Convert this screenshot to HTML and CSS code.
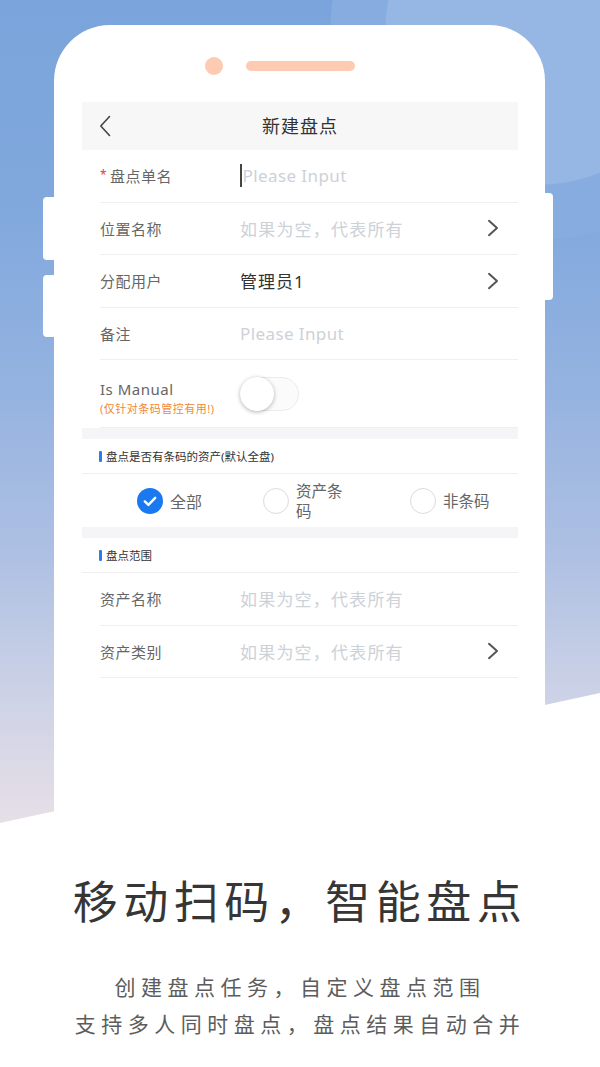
FILE: index.html
```html
<!DOCTYPE html>
<html lang="zh-CN">
<head>
<meta charset="utf-8">
<title>新建盘点</title>
<link rel="stylesheet" href="styles.css">
</head>
<body>
<div class="stage">
  <div class="phone">
    <span class="btn btn-l1"></span>
    <span class="btn btn-l2"></span>
    <span class="btn btn-r"></span>
    <div class="speaker"><span class="cam"></span><span class="slot"></span></div>
    <div class="screen">
      <div class="nav">
        <svg class="back" width="12" height="22" viewBox="0 0 12 22"><path d="M10.5 1.5 L1.8 11 L10.5 20.5"/></svg>
        <div class="nav-title">新建盘点</div>
        <span></span>
      </div>

      <div class="row">
        <div class="label"><span class="req">*</span>盘点单名</div>
        <div class="value"><span class="cursor"></span><span class="ph">Please Input</span></div>
      </div>
      <div class="row">
        <div class="label">位置名称</div>
        <div class="value"><span class="ph ph-cn">如果为空，代表所有</span></div>
        <svg class="chev" width="12" height="18" viewBox="0 0 12 18"><path d="M2 1.8 L10 9 L2 16.2"/></svg>
      </div>
      <div class="row">
        <div class="label">分配用户</div>
        <div class="value">管理员1</div>
        <svg class="chev" width="12" height="18" viewBox="0 0 12 18"><path d="M2 1.8 L10 9 L2 16.2"/></svg>
      </div>
      <div class="row">
        <div class="label">备注</div>
        <div class="value"><span class="ph">Please Input</span></div>
      </div>
      <div class="row row-manual">
        <div class="label label-manual">
          <div class="lm-main">Is Manual</div>
          <div class="lm-note">(仅针对条码管控有用!)</div>
        </div>
        <div class="toggle"><span class="knob"></span></div>
      </div>

      <div class="band"></div>
      <div class="sec">盘点是否有条码的资产(默认全盘)</div>
      <div class="radios">
        <div class="radio r1">
          <span class="dot dot-on"><svg width="26" height="26" viewBox="0 0 26 26"><path d="M7.8 13.4 L11.4 16.9 L18.2 9.8"/></svg></span>
          <span class="rlabel">全部</span>
        </div>
        <div class="radio r2">
          <span class="dot"></span>
          <span class="rlabel rlabel-wrap">资产条码</span>
        </div>
        <div class="radio r3">
          <span class="dot"></span>
          <span class="rlabel">非条码</span>
        </div>
      </div>
      <div class="band"></div>
      <div class="sec">盘点范围</div>
      <div class="row">
        <div class="label">资产名称</div>
        <div class="value"><span class="ph ph-cn">如果为空，代表所有</span></div>
      </div>
      <div class="row">
        <div class="label">资产类别</div>
        <div class="value"><span class="ph ph-cn">如果为空，代表所有</span></div>
        <svg class="chev" width="12" height="18" viewBox="0 0 12 18"><path d="M2 1.8 L10 9 L2 16.2"/></svg>
      </div>
    </div>
  </div>

  <div class="caption">
    <h1 class="cap-title">移动扫码，智能盘点</h1>
    <p class="cap-sub">创建盘点任务，自定义盘点范围</p>
    <p class="cap-sub">支持多人同时盘点，盘点结果自动合并</p>
  </div>
</div>
</body>
</html>
```

FILE: styles.css
```css
html, body {
  margin: 0;
  padding: 0;
}

.stage {
  position: relative;
  width: 600px;
  height: 1067px;
  overflow: hidden;
  box-sizing: border-box;
  padding-top: 25px;
  font-family: "Noto Sans", "Noto Sans CJK SC", sans-serif;
  background:
    radial-gradient(circle 155px at 540px 30px, #96b6e4 0, #96b6e4 154px, rgba(150,182,228,0) 155px),
    radial-gradient(circle 210px at 540px 30px, #87ade0 0, #87ade0 209px, rgba(135,173,224,0) 210px),
    linear-gradient(180deg, #7aa4db 0%, #80a8dd 19%, #95b3e0 37%, #aec0e3 52%, #ccd2e6 65%, #e6dfe7 77%, #ece3ea 100%);
}

.stage::before {
  content: "";
  position: absolute;
  left: 0;
  top: 0;
  width: 600px;
  height: 1067px;
  background: #fff;
  clip-path: polygon(0 823px, 600px 693px, 600px 1067px, 0 1067px);
}

/* phone body */
.phone {
  position: relative;
  z-index: 1;
  margin-left: 54px;
  width: 491px;
  height: 800px;
  box-sizing: border-box;
  background: #fff;
  border-radius: 56px 56px 0 0;
  padding-top: 32px;
}

.btn {
  position: absolute;
  background: #fff;
}
.btn-l1 {
  left: -11px;
  top: 172px;
  width: 12px;
  height: 63px;
  border-radius: 4px 0 0 4px;
}
.btn-l2 {
  left: -11px;
  top: 250px;
  width: 12px;
  height: 62px;
  border-radius: 4px 0 0 4px;
}
.btn-r {
  right: -8px;
  top: 168px;
  width: 9px;
  height: 107px;
  border-radius: 0 4px 4px 0;
}

.speaker {
  display: flex;
  align-items: center;
  height: 18px;
  padding-left: 151px;
  gap: 23px;
}
.cam {
  width: 18px;
  height: 18px;
  border-radius: 50%;
  background: #fccbb1;
}
.slot {
  width: 109px;
  height: 10px;
  border-radius: 5px;
  background: #fccbb1;
}

.screen {
  margin: 27px 27px 0 28px;
  background: #fff;
}

/* nav bar */
.nav {
  height: 48px;
  background: #f7f7f7;
  display: grid;
  grid-template-columns: 1fr auto 1fr;
  align-items: center;
}
.back {
  margin-left: 17px;
  fill: none;
  stroke: #444;
  stroke-width: 1.6;
  stroke-linecap: round;
  stroke-linejoin: round;
}
.nav-title {
  font-size: 18px;
  letter-spacing: 1px;
  color: #333;
  padding-bottom: 2px;
}

/* form rows */
.row {
  height: 52.5px;
  box-sizing: border-box;
  margin-left: 18px;
  padding-right: 19px;
  border-bottom: 1px solid #efefef;
  display: flex;
  align-items: center;
}
.label {
  width: 140px;
  flex-shrink: 0;
  font-size: 15px;
  letter-spacing: 0.5px;
  color: #666;
}
.req {
  display: inline-block;
  width: 10px;
  color: #e33a3a;
  font-size: 12px;
  vertical-align: 3px;
}
.value {
  flex: 1;
  display: flex;
  align-items: center;
  font-size: 17px;
  letter-spacing: 1px;
  color: #333;
}
.ph {
  color: #cdd1d8;
  letter-spacing: 0.4px;
}
.ph-cn {
  letter-spacing: 1.2px;
}
.cursor {
  width: 1.6px;
  height: 23px;
  background: #444;
  margin-right: 1px;
}
.chev {
  fill: none;
  stroke: #555;
  stroke-width: 2;
  stroke-linecap: round;
  stroke-linejoin: round;
}

.row-manual {
  height: 68px;
}
.label-manual {
  padding-top: 8px;
}
.lm-main {
  line-height: 22px;
  font-size: 15px;
  color: #666;
}
.lm-note {
  line-height: 17px;
  font-size: 11px;
  letter-spacing: 0.5px;
  color: #f0883a;
}
.toggle {
  width: 59px;
  height: 34px;
  box-sizing: border-box;
  border: 1px solid #ececec;
  border-radius: 17px;
  background: #fbfbfb;
  display: flex;
  align-items: center;
}
.knob {
  width: 34px;
  height: 34px;
  margin-left: -1px;
  border-radius: 50%;
  background: #fff;
  box-shadow: 0 1px 4px rgba(0, 0, 0, 0.3);
}

.band {
  height: 11px;
  background: #f5f5f7;
}

.sec {
  height: 35px;
  box-sizing: border-box;
  border-bottom: 1px solid #efefef;
  display: flex;
  align-items: center;
  padding-left: 17px;
  font-size: 11.5px;
  color: #333;
}
.sec::before {
  content: "";
  width: 3px;
  height: 11px;
  background: #2a7cf4;
  margin-right: 4px;
  border-radius: 1px;
}

/* radio group */
.radios {
  height: 53px;
  display: flex;
  align-items: center;
}
.radio {
  display: flex;
  align-items: center;
  gap: 7px;
}
.r1 { margin-left: 55px; }
.r2 { margin-left: 61px; }
.r3 { margin-left: 66px; }
.dot {
  width: 26px;
  height: 26px;
  box-sizing: border-box;
  border-radius: 50%;
  border: 1px solid #dcdcdc;
  background: #fff;
  flex-shrink: 0;
}
.dot-on {
  border: none;
  background: #1b79f0;
}
.dot-on svg {
  display: block;
  fill: none;
  stroke: #fff;
  stroke-width: 2.4;
  stroke-linecap: round;
  stroke-linejoin: round;
}
.rlabel {
  font-size: 16px;
  color: #666;
}
.rlabel-wrap {
  font-size: 15.5px;
  width: 48px;
  line-height: 20px;
}
.r3 .rlabel {
  font-size: 15.5px;
}

/* caption */
.caption {
  position: relative;
  z-index: 1;
  text-align: center;
}
.cap-title {
  margin: 49px 0 0;
  font-size: 45px;
  line-height: 56px;
  font-weight: 400;
  letter-spacing: 5.5px;
  color: #363636;
}
.cap-sub {
  margin: 0;
  font-size: 21px;
  line-height: 37px;
  letter-spacing: 5.5px;
  color: #5c5c5c;
}
.cap-title + .cap-sub {
  margin-top: 39px;
}
```
